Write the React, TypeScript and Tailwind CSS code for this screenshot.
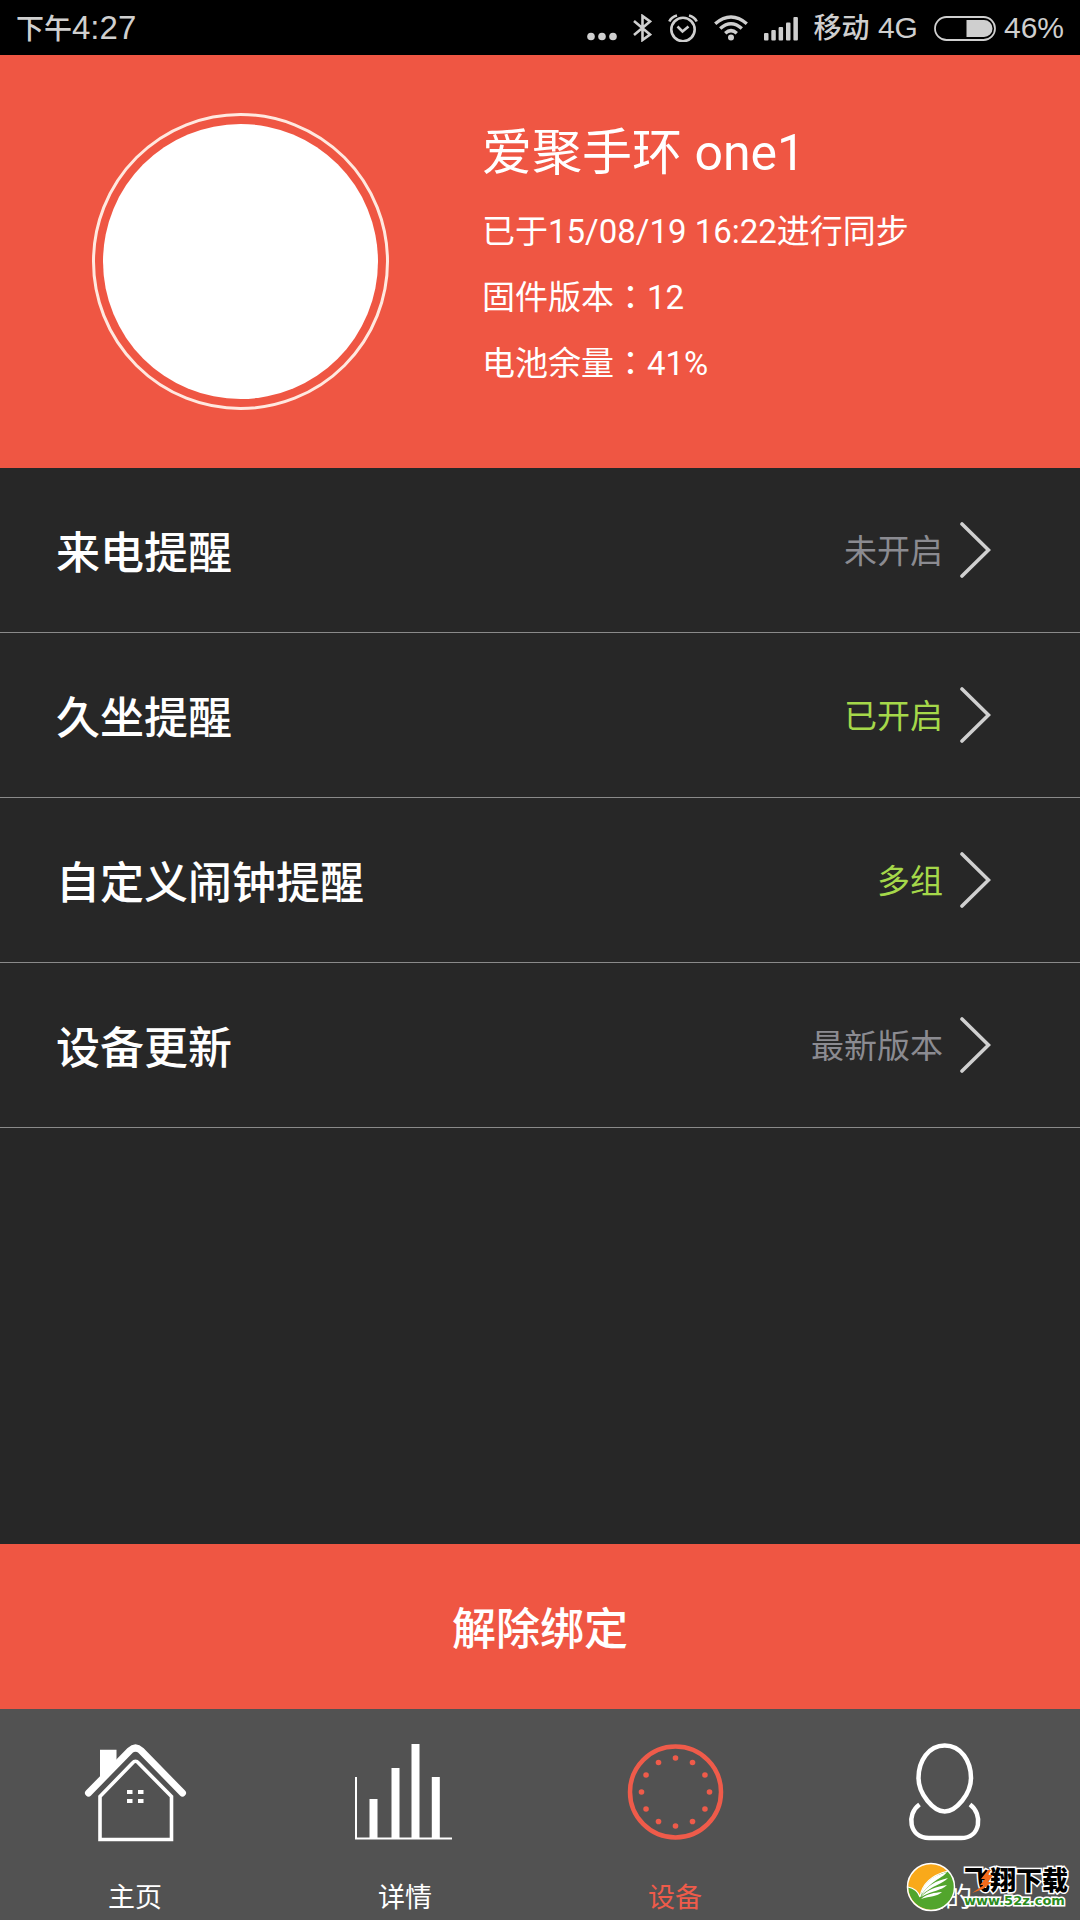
import type { ReactNode } from 'react';

type Reminder = { title: string; status: string; active: boolean };

const reminders: Reminder[] = [
  { title: '来电提醒', status: '未开启', active: false },
  { title: '久坐提醒', status: '已开启', active: true },
  { title: '自定义闹钟提醒', status: '多组', active: true },
  { title: '设备更新', status: '最新版本', active: false },
];

const clockDots = Array.from({ length: 12 }, (_, i) => {
  const angle = (i * Math.PI) / 6;
  return { cx: 50.5 + 34 * Math.sin(angle), cy: 48 - 34 * Math.cos(angle) };
});

function StatusBar() {
  return (
    <div className="flex h-[55px] items-center justify-between bg-black px-4 font-['Liberation_Sans','Noto_Sans_CJK_SC',sans-serif] text-[30px] leading-none text-[#cfcfcf]">
      <div className="text-[33px]">
        <span className="text-[28px] font-medium">下午</span>4:27
      </div>
      <div className="flex items-center gap-4">
        <svg width="30" height="28" viewBox="0 0 30 28" fill="currentColor" aria-hidden="true">
          <circle cx="4" cy="22.5" r="3.8" />
          <circle cx="15" cy="22.5" r="3.8" />
          <circle cx="26" cy="22.5" r="3.8" />
        </svg>
        <svg width="19" height="28" viewBox="0 0 19 28" fill="none" stroke="currentColor" strokeWidth="2.6" aria-hidden="true">
          <path d="M1 7 L17 20.5 L9.5 26 V2 L17 7.5 L1 21" />
        </svg>
        <svg width="30" height="28" viewBox="0 0 30 28" fill="none" stroke="currentColor" strokeWidth="2.6" aria-hidden="true">
          <circle cx="15" cy="15.5" r="11.7" />
          <path d="M9.5 12.5 L14.5 17.5 L20.5 12.5" />
          <path d="M1.3 7.5 Q3.5 2.8 9 1.5 M28.7 7.5 Q26.5 2.8 21 1.5" />
        </svg>
        <svg width="34" height="28" viewBox="0 0 34 28" fill="none" stroke="currentColor" strokeWidth="3.4" aria-hidden="true">
          <path d="M1.2 9.7 Q17 -3.7 32.8 9.7" />
          <path d="M6.2 14.6 Q17 5 27.8 14.6" />
          <path d="M11.2 19.3 Q17 14 22.8 19.3" />
          <circle cx="17" cy="23.5" r="3" fill="currentColor" stroke="none" />
        </svg>
        <svg width="34" height="28" viewBox="0 0 34 28" fill="currentColor" aria-hidden="true">
          <rect x="0" y="19" width="4.5" height="7.5" rx="1" />
          <rect x="7.3" y="16" width="4.5" height="10.5" rx="1" />
          <rect x="14.6" y="13" width="4.5" height="13.5" rx="1" />
          <rect x="22" y="8.5" width="4.5" height="18" rx="1" />
          <rect x="29.4" y="3" width="4.5" height="23.5" rx="1" />
        </svg>
        <div>
          <span className="text-[28px] font-medium">移动</span> 4G
        </div>
        <div className="flex items-center gap-2">
          <svg width="62" height="28" viewBox="0 0 62 28" aria-hidden="true">
            <rect x="1" y="3" width="60" height="23" rx="11.5" fill="none" stroke="currentColor" strokeWidth="1.8" />
            <path d="M32.5 6 H50 A8.5 8.5 0 0 1 50 23 H32.5 Z" fill="currentColor" />
          </svg>
          <span>46%</span>
        </div>
      </div>
    </div>
  );
}

function InfoLine({ label, value }: { label: string; value: string }) {
  return (
    <p>
      {label}
      <span className="font-['Noto_Sans_CJK_TC',sans-serif] leading-none">：</span>
      {value}
    </p>
  );
}

function DeviceHeader() {
  return (
    <header className="flex bg-[#ef5643] pt-[58px] pb-[58px] pl-[92px] text-white">
      <div className="size-[297px] shrink-0 rounded-full border-[3px] border-[#ffe9e0] p-2">
        <div className="size-full rounded-full bg-white" />
      </div>
      <div className="ml-[93px] pt-0.5 text-[33px] leading-[66px]">
        <h1 className="pb-2 text-[50px] leading-[76px]">爱聚手环 one1</h1>
        <p>已于15/08/19 16:22进行同步</p>
        <InfoLine label="固件版本" value="12" />
        <InfoLine label="电池余量" value="41%" />
      </div>
    </header>
  );
}

function ReminderRow({ title, status, active }: Reminder) {
  return (
    <li className="border-b border-[#8a8a8a]">
      <button type="button" className="flex h-[164px] w-full items-center pr-[89px] pl-14 text-left">
        <span className="flex-1 pt-2 text-[44px] font-medium text-white">{title}</span>
        <span className={active ? 'pt-1 text-[33px] text-[#a5d84a]' : 'pt-1 text-[33px] text-[#8b8b91]'}>{status}</span>
        <svg className="ml-4 text-[#d0d0d0]" width="32" height="60" viewBox="0 0 32 60" fill="none" stroke="currentColor" strokeWidth="3.6" strokeLinecap="round" aria-hidden="true">
          <path d="M3 4 L29.5 30 L3 56" />
        </svg>
      </button>
    </li>
  );
}

function TabIcon({ children }: { children: ReactNode }) {
  return (
    <svg width="100" height="98" viewBox="0 0 100 98" fill="none" stroke="currentColor" overflow="visible" aria-hidden="true">
      {children}
    </svg>
  );
}

function Tab({ label, current, children }: { label: string; current?: boolean; children: ReactNode }) {
  return (
    <a
      href="#"
      aria-current={current ? 'page' : undefined}
      className={
        current
          ? 'flex flex-col items-center gap-9 pt-[35px] text-[#ef5b4a]'
          : 'flex flex-col items-center gap-9 pt-[35px] text-white'
      }
    >
      <TabIcon>{children}</TabIcon>
      <span className="text-[27px] leading-[40px]">{label}</span>
    </a>
  );
}

function TabBar() {
  return (
    <nav className="grid h-[211px] grid-cols-4 overflow-hidden bg-[#525252]">
      <Tab label="主页">
        <path d="M3.5 49 L45 6.5 Q50.5 1.5 56 6.5 L97.5 49" strokeWidth="7" strokeLinecap="round" />
        <path d="M15 5.7 H31.5 V17 L15 34 Z" fill="currentColor" stroke="none" />
        <path d="M15 95.5 V52.5 L47.5 19 Q50.5 15.5 53.5 19 L86.5 52.5 V95.5 Z" strokeWidth="3.6" />
        <path d="M42 46 h5.5 v4 h-5.5 Z M53 46 h5.5 v4 h-5.5 Z M42 55 h5.5 v4 h-5.5 Z M53 55 h5.5 v4 h-5.5 Z" fill="currentColor" stroke="none" />
      </Tab>
      <Tab label="详情">
        <path d="M1 33 V94.5 H97" strokeWidth="2" />
        <path d="M14.5 55 h8 v39 h-8 Z M36.5 24 h8 v70 h-8 Z M56.5 0 h8 v94 h-8 Z M76.8 33 h8 v61 h-8 Z" fill="currentColor" stroke="none" />
      </Tab>
      <Tab label="设备" current>
        <circle cx="50.5" cy="48" r="45.5" strokeWidth="4.5" />
        {clockDots.map((dot, i) => (
          <circle key={i} cx={dot.cx} cy={dot.cy} r="2.8" fill="currentColor" stroke="none" />
        ))}
      </Tab>
      <Tab label="我的">
        <path d="M49.7 1.5 C66 1.5 76 17 76 34 C76 50 61 67.5 49.7 67.5 C38.5 67.5 23.5 50 23.5 34 C23.5 17 33.5 1.5 49.7 1.5 Z" strokeWidth="4.5" />
        <path d="M24.5 60.5 C11 70 14 94 34 94 H66 C86 94 88 70 75 60.5" strokeWidth="4.5" />
      </Tab>
    </nav>
  );
}

function Watermark() {
  return (
    <div className="absolute right-3 bottom-2 flex items-center gap-2 leading-none">
      <svg width="50" height="50" viewBox="0 0 50 50" aria-hidden="true">
        <circle cx="25" cy="25" r="23.5" fill="#f9a91a" />
        <path d="M2 25 C8 26 12 29 14 35 C16 22 26 13 42 9 C52 20 50 37 38 45 C25 52 4 46 2 25 Z" fill="#52a52c" />
        <path d="M2 25 C8 26 12 29 14 35 C16 22 26 13 42 9" fill="none" stroke="#fff" strokeWidth="1.2" />
        <circle cx="25" cy="25" r="23.5" fill="none" stroke="#fff" strokeWidth="1.5" />
        <g fill="#fff">
          <path d="M15 33 C17 21 26 14 41 10 C37 16 27 17 15 33 Z" />
          <path d="M15 34 C21 23 30 19 42 16 C37 22 26 23 15 34 Z" />
          <path d="M15 35 C22 27 30 25 41 23 C35 29 27 28 15 35 Z" />
          <path d="M15 37 C22 31 28 31 36 30 C31 35 24 34 15 37 Z" />
        </g>
      </svg>
      <div className="relative">
        <div className="font-['Noto_Sans_CJK_SC',sans-serif] text-[26px] leading-[28px] font-black text-black [paint-order:stroke_fill] [-webkit-text-stroke:3px_#fff]">
          飞翔下载
        </div>
        <div className="font-['DejaVu_Sans',sans-serif] text-[13px] leading-[16px] font-bold text-[#2b8c1e] [paint-order:stroke_fill] [-webkit-text-stroke:3px_#fff]">
          www.52z.com
        </div>
        <svg className="absolute top-1 left-2" width="22" height="24" viewBox="0 0 22 24" aria-hidden="true">
          <path d="M16 1 L9 10 H13 L8 16 H12 L0 24 L11 20 L20 13 H16 L21 6 H16 L19 1 Z" fill="#f26a1b" />
        </svg>
      </div>
    </div>
  );
}

export default function App() {
  return (
    <div className="relative flex min-h-screen flex-col bg-[#272727] font-[Roboto,'Noto_Sans_CJK_SC',sans-serif]">
      <StatusBar />
      <DeviceHeader />
      <main className="flex flex-1 flex-col">
        <ul className="flex-1">
          {reminders.map((item) => (
            <ReminderRow key={item.title} {...item} />
          ))}
        </ul>
        <button type="button" className="h-[165px] w-full bg-[#ef5643] pt-1.5 text-[44px] font-medium text-white">
          解除绑定
        </button>
      </main>
      <TabBar />
      <Watermark />
    </div>
  );
}
